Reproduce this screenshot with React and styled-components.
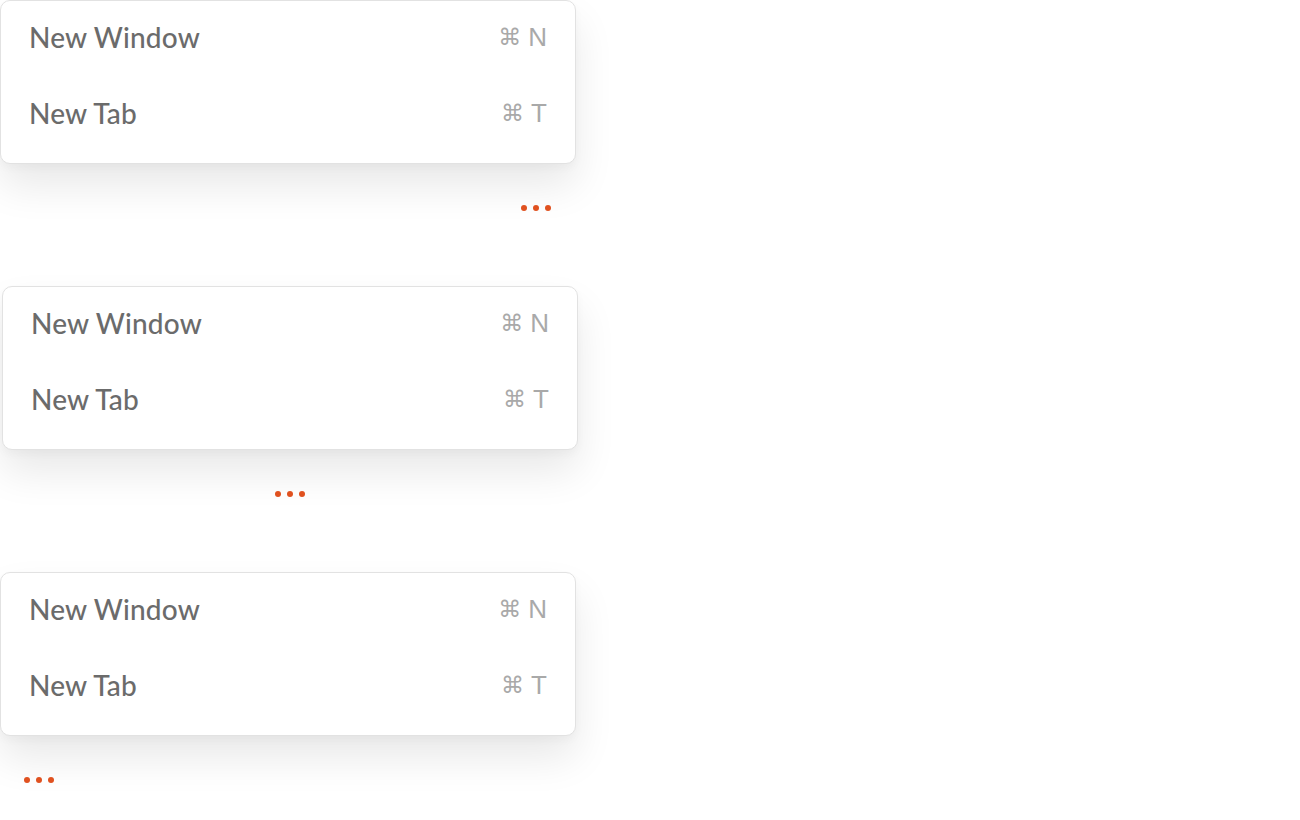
import React from "react";
import styled, { createGlobalStyle } from "styled-components";

const GlobalStyle = createGlobalStyle`
  html, body {
    margin: 0;
    padding: 0;
    background: #ffffff;
  }
  body {
    font-family: Lato, "Noto Sans", sans-serif;
  }
  * {
    box-sizing: border-box;
  }
`;

const Page = styled.div`
  display: flex;
  flex-direction: column;
  width: 580px;
`;

const Section = styled.div`
  display: flex;
  flex-direction: column;
  height: 286px;
  padding-left: ${(p) => p.$shift}px;
`;

const Card = styled.div`
  width: 576px;
  height: 164px;
  padding-top: 1px;
  background: #ffffff;
  border: 1px solid #e2e2e2;
  border-radius: 10px;
  box-shadow: 0 22px 40px rgba(0, 0, 0, 0.09), 0 4px 10px rgba(0, 0, 0, 0.03);
`;

const Item = styled.div`
  display: flex;
  align-items: center;
  justify-content: space-between;
  height: 76px;
  padding: 0 28px 6px 28px;
`;

const Label = styled.span`
  font-size: 28px;
  font-weight: 500;
  color: #6b6b6b;
  letter-spacing: 0.2px;
`;

const Shortcut = styled.span`
  font-family: "Liberation Sans", "DejaVu Sans", sans-serif;
  font-size: 26px;
  color: #a9a9a9;
  display: flex;
  align-items: center;
  gap: 7px;
`;

const Cmd = styled.span`
  font-family: "DejaVu Sans", sans-serif;
  font-size: 23px;
`;

const DotRow = styled.div`
  display: flex;
  justify-content: ${(p) => p.$align};
  padding: 41px 25px 0 24px;
  width: 576px;
`;

const Dots = styled.div`
  display: flex;
  gap: 6px;
`;

const Dot = styled.span`
  width: 6px;
  height: 6px;
  border-radius: 50%;
  background: #e0511f;
`;

const items = [
  { label: "New Window", key: "N" },
  { label: "New Tab", key: "T" },
];

const variants = [
  { align: "flex-end", shift: 0 },
  { align: "center", shift: 2 },
  { align: "flex-start", shift: 0 },
];

export default function App() {
  return (
    <>
      <GlobalStyle />
      <Page>
        {variants.map((v, i) => (
          <Section key={i} $shift={v.shift}>
            <Card>
              {items.map((it) => (
                <Item key={it.key}>
                  <Label>{it.label}</Label>
                  <Shortcut>
                    <Cmd>⌘</Cmd>
                    {it.key}
                  </Shortcut>
                </Item>
              ))}
            </Card>
            <DotRow $align={v.align}>
              <Dots>
                <Dot />
                <Dot />
                <Dot />
              </Dots>
            </DotRow>
          </Section>
        ))}
      </Page>
    </>
  );
}
